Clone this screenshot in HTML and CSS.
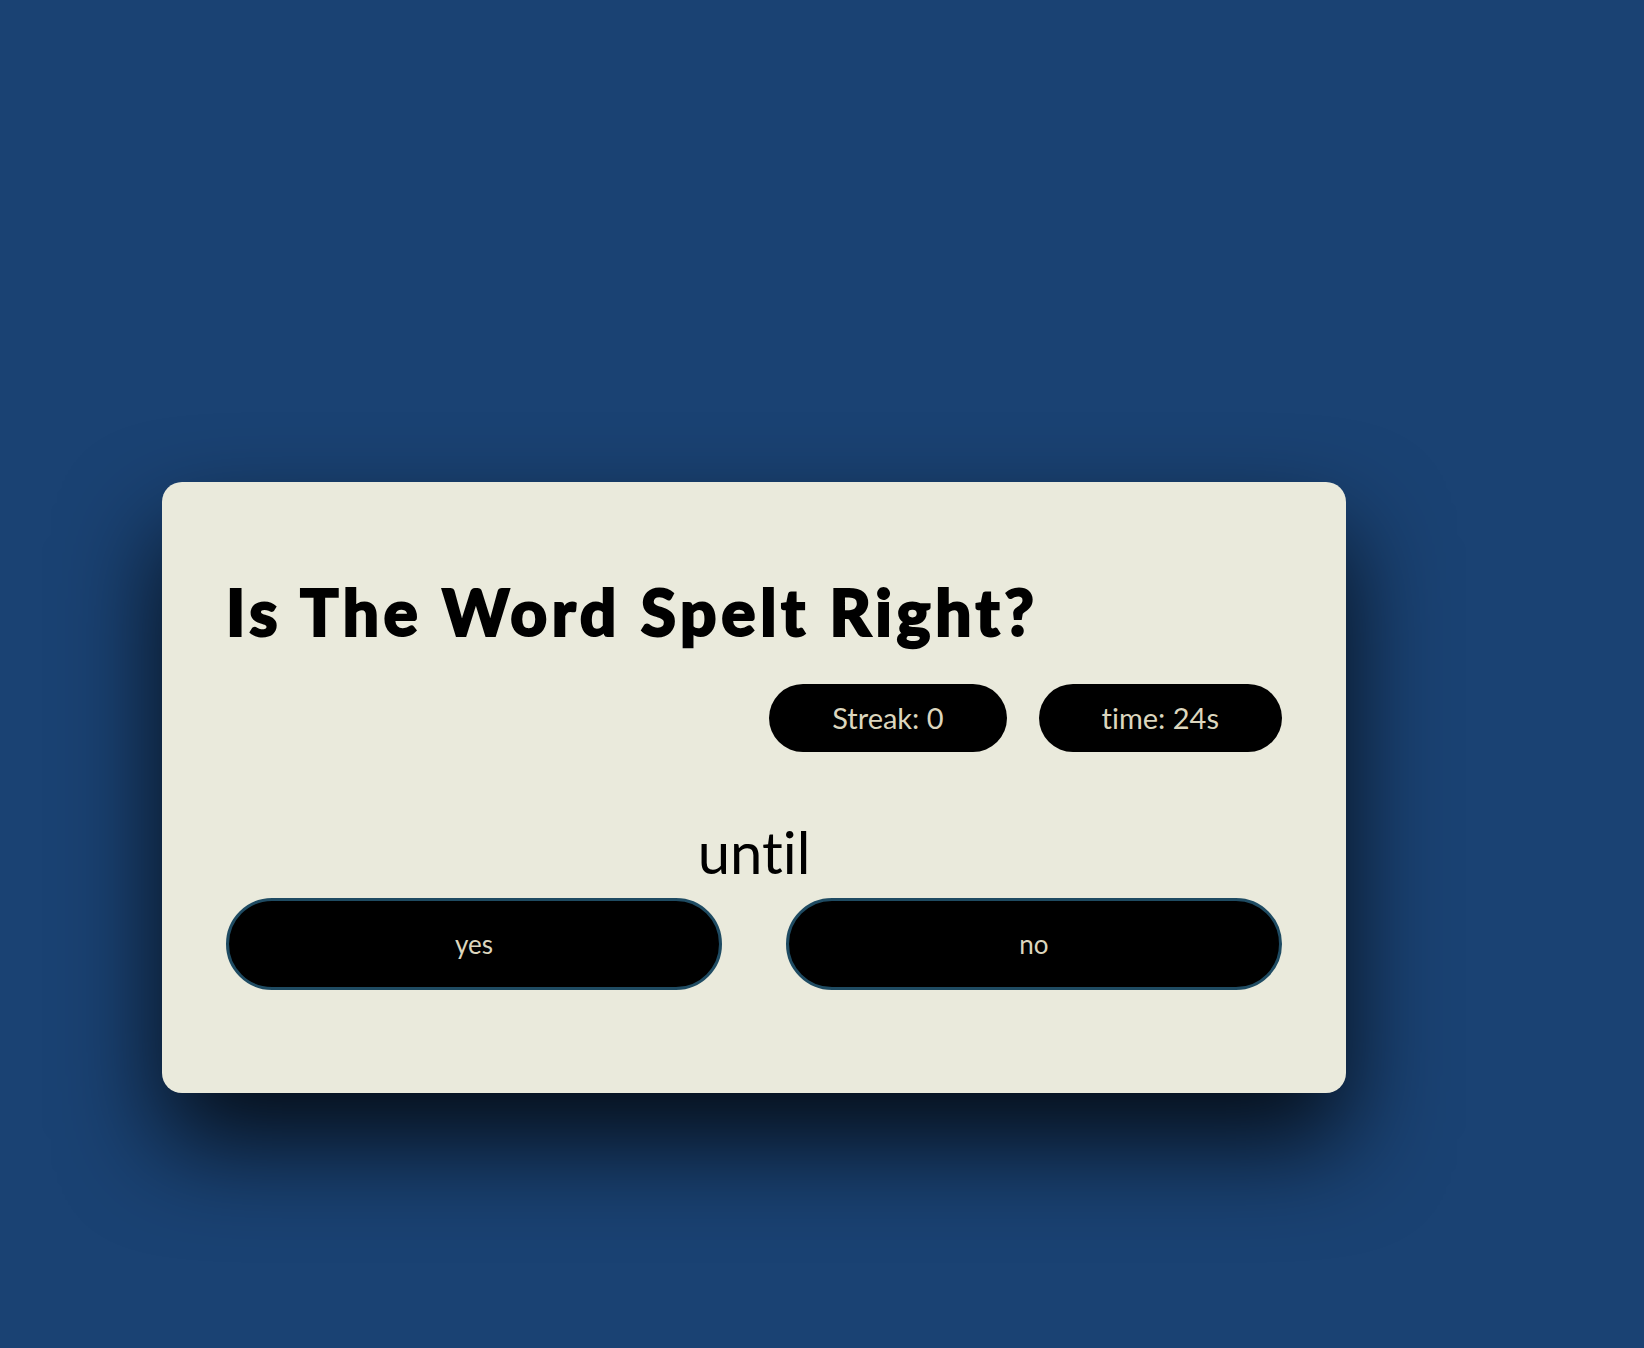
FILE: index.html
```html
<!DOCTYPE html>
<html lang="en">
<head>
<meta charset="utf-8">
<title>Is The Word Spelt Right?</title>
<link rel="stylesheet" href="styles.css">
</head>
<body>
<main class="stage">
  <section class="card">
    <h1 class="title">Is The Word Spelt Right?</h1>
    <div class="stats">
      <div class="pill">Streak: 0</div>
      <div class="pill">time: 24s</div>
    </div>
    <p class="word">until</p>
    <div class="answers">
      <button class="answer" type="button">yes</button>
      <button class="answer" type="button">no</button>
    </div>
  </section>
</main>
</body>
</html>
```

FILE: styles.css
```css
html, body {
  margin: 0;
  padding: 0;
}

body {
  background: #1a4273;
  min-height: 100vh;
  font-family: Lato, "Open Sans", "Noto Sans", sans-serif;
  font-variant-ligatures: none;
  color: #000;
}

.stage {
  padding: 482px 0 0 162px;
  min-height: 1348px;
  box-sizing: border-box;
}

.card {
  box-sizing: border-box;
  width: 1184px;
  padding: 64px 64px 103px;
  background: #eaeadc;
  border-radius: 20px;
  box-shadow: 0 50px 100px rgba(0, 0, 0, 0.8);
}

.title {
  margin: 34px 0 0;
  font-size: 64px;
  line-height: 1;
  font-weight: 900;
  letter-spacing: 4.6px;
  -webkit-text-stroke: 2px #000;
}

.stats {
  display: flex;
  justify-content: flex-end;
  gap: 32px;
  margin-top: 40px;
}

.pill {
  height: 68px;
  line-height: 68px;
  padding: 0 63px;
  background: #000;
  color: #dcd6be;
  border-radius: 34px;
  font-size: 29px;
}

.word {
  margin: 71px 0 0;
  text-align: center;
  font-size: 58px;
  line-height: 1;
}

.answers {
  display: grid;
  grid-template-columns: 1fr 1fr;
  gap: 64px;
  margin-top: 17px;
}

.answer {
  height: 92px;
  border: 3px solid #1f4b62;
  border-radius: 46px;
  background: #000;
  color: #dcd6be;
  font-family: Lato, "Open Sans", "Noto Sans", sans-serif;
  font-variant-ligatures: none;
  font-size: 26px;
  padding: 0;
  cursor: pointer;
}
```
